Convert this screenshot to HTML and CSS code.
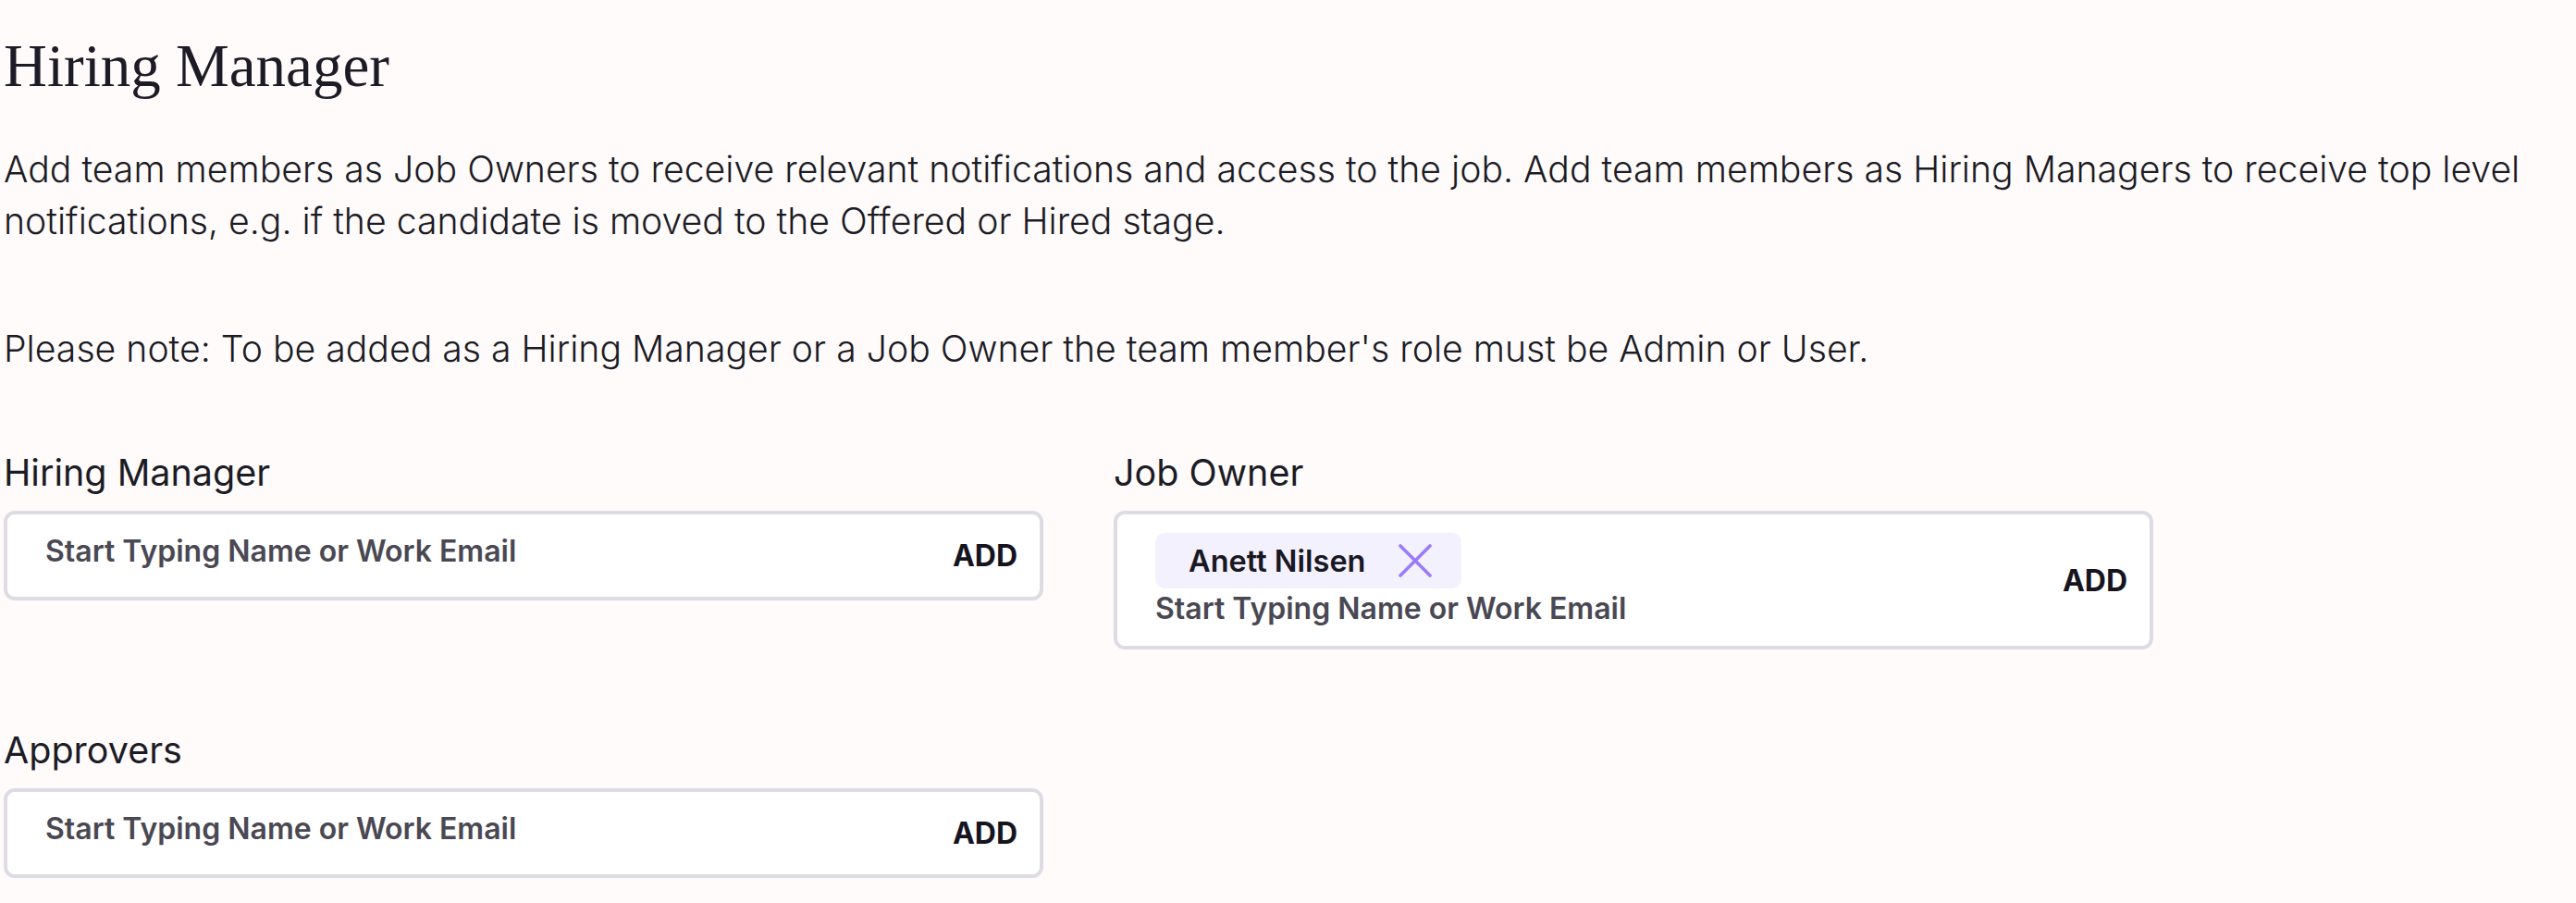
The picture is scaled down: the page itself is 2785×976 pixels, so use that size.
FILE: index.html
```html
<!DOCTYPE html>
<html lang="en">
<head>
<meta charset="utf-8">
<title>Hiring Manager</title>
<link rel="stylesheet" href="styles.css">
</head>
<body>
<main class="page">
  <h1 class="title">Hiring Manager</h1>
  <p class="intro">Add team members as Job Owners to receive relevant notifications and access to the job. Add team members as Hiring Managers to receive top level notifications, e.g. if the candidate is moved to the Offered or Hired stage.</p>
  <p class="note">Please note: To be added as a Hiring Manager or a Job Owner the team member's role must be Admin or User.</p>

  <div class="fields">
    <div class="field">
      <div class="field-label">Hiring Manager</div>
      <div class="box">
        <div class="entry empty"><span class="placeholder">Start Typing Name or Work Email</span></div>
        <button class="add" type="button">ADD</button>
      </div>
    </div>

    <div class="field">
      <div class="field-label">Job Owner</div>
      <div class="box">
        <div class="entry">
          <div class="chips">
            <span class="chip">
              <span class="chip-name">Anett Nilsen</span>
              <svg class="chip-x" viewBox="0 0 36 36" aria-hidden="true"><path d="M2 2 L34 34 M34 2 L2 34"/></svg>
            </span>
          </div>
          <span class="placeholder">Start Typing Name or Work Email</span>
        </div>
        <button class="add" type="button">ADD</button>
      </div>
    </div>

    <div class="field">
      <div class="field-label">Approvers</div>
      <div class="box">
        <div class="entry empty"><span class="placeholder">Start Typing Name or Work Email</span></div>
        <button class="add" type="button">ADD</button>
      </div>
    </div>
  </div>
</main>
</body>
</html>
```

FILE: styles.css
```css
html, body {
  margin: 0;
  padding: 0;
  background: #fefbfa;
}

body {
  font-family: Inter, "Noto Sans", "Liberation Sans", sans-serif;
  color: #1c1b26;
}

.page {
  padding: 34px 0 0 4px;
}

.title {
  margin: 0;
  font-family: "Liberation Serif", serif;
  font-weight: 400;
  font-size: 65px;
  line-height: 74px;
  color: #1c1b26;
}

.intro,
.note {
  margin: 0;
  font-size: 39.2px;
  font-weight: 300;
  line-height: 56px;
}

.intro {
  margin-top: 47px;
}

.note {
  margin-top: 82px;
}

.fields {
  margin-top: 84px;
  display: grid;
  grid-template-columns: 1124px 1124px;
  column-gap: 76px;
  row-gap: 87px;
  align-items: start;
}

.field-label {
  font-size: 39.5px;
  font-weight: 400;
  line-height: 44px;
  margin-bottom: 19px;
}

.box {
  display: flex;
  align-items: center;
  background: #ffffff;
  border: 4px solid #dddce5;
  border-radius: 12px;
}

.entry {
  flex: 1;
  display: flex;
  flex-direction: column;
  align-items: flex-start;
  padding: 20px 0 22px 41px;
}

.entry.empty {
  padding: 22px 0 31px 41px;
}

.placeholder {
  font-size: 32px;
  font-weight: 600;
  line-height: 36px;
  color: #4a4853;
}

.chips {
  display: flex;
  margin-bottom: 4px;
}

.chip {
  display: flex;
  align-items: center;
  height: 60px;
  padding: 0 32px 0 36px;
  background: #f3f1fe;
  border-radius: 10px;
}

.chip-name {
  font-size: 32.5px;
  font-weight: 600;
  color: #191823;
}

.chip-x {
  width: 36px;
  height: 36px;
  margin-left: 35px;
  fill: none;
  stroke: #9a7bf8;
  stroke-width: 3.6;
  stroke-linecap: round;
}

.add {
  border: 0;
  background: none;
  padding: 0 24px 0 20px;
  font-family: Inter, "Noto Sans", "Liberation Sans", sans-serif;
  font-size: 32px;
  font-weight: 700;
  color: #16151f;
  cursor: pointer;
}
```
